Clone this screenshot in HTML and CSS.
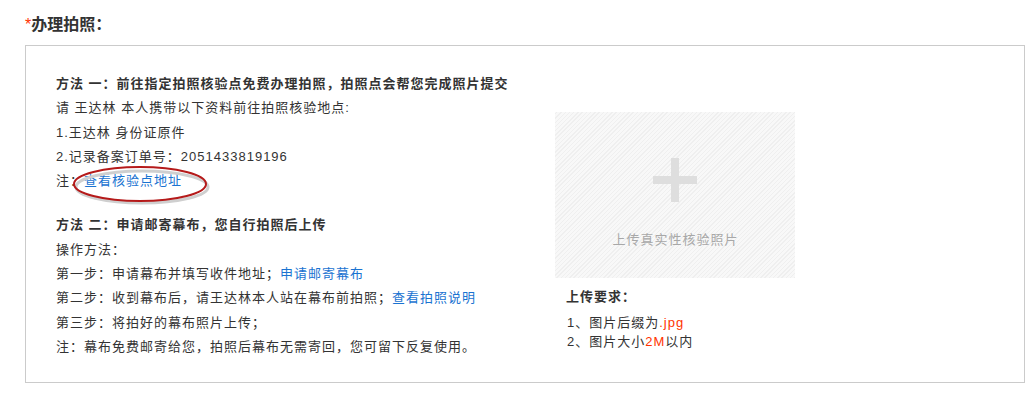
FILE: index.html
```html
<!DOCTYPE html>
<html lang="zh">
<head>
<meta charset="utf-8">
<link rel="stylesheet" href="styles.css">
</head>
<body>
<div class="page">
  <h2 class="title"><span class="star">*</span>办理拍照：</h2>
  <div class="panel">
    <div class="left">
      <div class="section">
        <p class="head">方法 一：前往指定拍照核验点免费办理拍照，拍照点会帮您完成照片提交</p>
        <p>请 王达林 本人携带以下资料前往拍照核验地点:</p>
        <p>1.王达林 身份证原件</p>
        <p>2.记录备案订单号：2051433819196</p>
        <p class="note">注：<a class="link" href="#">查看核验点地址</a>
          <svg class="ring" width="142" height="44" viewBox="0 0 142 44">
            <ellipse cx="71" cy="24" rx="66" ry="16" fill="none" stroke="#cfcfcf" stroke-width="3"/>
            <ellipse cx="69" cy="21" rx="66" ry="17" fill="none" stroke="#b51a1a" stroke-width="2"/>
          </svg>
        </p>
      </div>
      <div class="section">
        <p class="head">方法 二：申请邮寄幕布，您自行拍照后上传</p>
        <p>操作方法：</p>
        <p>第一步：申请幕布并填写收件地址；<a class="link" href="#">申请邮寄幕布</a></p>
        <p>第二步：收到幕布后，请王达林本人站在幕布前拍照；<a class="link" href="#">查看拍照说明</a></p>
        <p>第三步：将拍好的幕布照片上传；</p>
        <p>注：幕布免费邮寄给您，拍照后幕布无需寄回，您可留下反复使用。</p>
      </div>
    </div>
    <div class="right">
      <div class="upload">
        <div class="plus"></div>
        <div class="upload-text">上传真实性核验照片</div>
      </div>
      <div class="req">
        <p class="req-head">上传要求：</p>
        <p class="req-item">1、图片后缀为<span class="hl">.jpg</span></p>
        <p class="req-item">2、图片大小<span class="hl">2M</span>以内</p>
      </div>
    </div>
  </div>
</div>
</body>
</html>
```

FILE: styles.css
```css
html, body {
  margin: 0;
  padding: 0;
  background: #fff;
}
body {
  font-family: "Liberation Sans", "Noto Sans CJK SC", sans-serif;
  font-size: 13px;
  letter-spacing: 1px;
  color: #333;
}
p { margin: 0; }
.page {
  padding: 14px 0 0 25px;
}
.title {
  margin: 0;
  height: 31px;
  font-size: 16px;
  line-height: 22px;
  font-weight: bold;
  letter-spacing: 0;
  color: #333;
}
.star {
  color: #ff3300;
  font-weight: normal;
}
.panel {
  width: 998px;
  height: 336px;
  border: 1px solid #cbcbcb;
  display: grid;
  grid-template-columns: 529px 1fr;
}
.left {
  padding: 26px 0 0 30px;
}
.section p {
  line-height: 24.3px;
  white-space: nowrap;
}
.section + .section {
  margin-top: 20px;
}
.head {
  font-weight: bold;
}
.link {
  color: #1a73d1;
  text-decoration: none;
}
.note {
  position: relative;
}
.ring {
  position: absolute;
  left: 15px;
  top: -6px;
  pointer-events: none;
}
.right {
  padding-top: 66px;
}
.upload {
  width: 240px;
  height: 166px;
  background: repeating-linear-gradient(-45deg, #efefef 0, #efefef 1px, #f8f8f8 1px, #f8f8f8 3px);
  display: flex;
  flex-direction: column;
  align-items: center;
}
.plus {
  margin-top: 46px;
  width: 44px;
  height: 44px;
  background:
    linear-gradient(#dedede, #dedede) center / 8px 44px no-repeat,
    linear-gradient(#dedede, #dedede) center / 44px 8px no-repeat;
}
.upload-text {
  margin-top: 30px;
  color: #a8a8a8;
  line-height: 16px;
  padding-left: 1px;
}
.req {
  padding: 9px 0 0 11px;
}
.req-head {
  font-weight: bold;
  line-height: 20px;
}
.req-item {
  line-height: 19px;
  padding-left: 1px;
}
.req-head + .req-item {
  margin-top: 6px;
}
.hl {
  color: #ff3300;
}
```
